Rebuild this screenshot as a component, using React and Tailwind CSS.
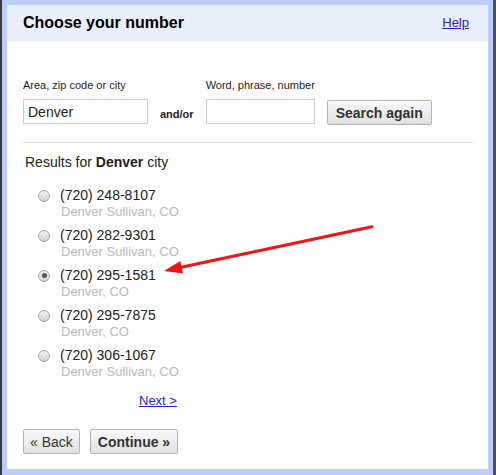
import React from "react";

const results = [
  { number: "(720) 248-8107", place: "Denver Sullivan, CO" },
  { number: "(720) 282-9301", place: "Denver Sullivan, CO" },
  { number: "(720) 295-1581", place: "Denver, CO", checked: true },
  { number: "(720) 295-7875", place: "Denver, CO" },
  { number: "(720) 306-1067", place: "Denver Sullivan, CO" },
];

function Radio({ checked }) {
  return (
    <span className="flex h-[12px] w-[12px] shrink-0 items-center justify-center rounded-full border border-[#a9a9a9] bg-gradient-to-b from-[#f2f2f2] to-[#d4d4d4]">
      {checked && <span className="h-[5px] w-[5px] rounded-full bg-[#555]" />}
    </span>
  );
}

export default function App() {
  return (
    <div className="relative h-[475px] w-[496px] border-l-2 border-r-[3px] border-l-[#3a3a3a] border-r-[#505050] bg-[#bccdfb] px-[5px] pb-[6px] pt-[5px] font-['Liberation_Sans',Arial,sans-serif] text-[#222]">
      <div className="flex h-full flex-col bg-white">
        <div className="flex h-9 shrink-0 items-center justify-between bg-[#e8eefa] pl-4 pr-[19px]">
          <h1 className="text-[16px] font-bold leading-5 text-black">Choose your number</h1>
          <a href="#" className="text-[13px] leading-4 text-[#2a22c8] underline">
            Help
          </a>
        </div>

        <div className="pl-4 pr-[15px] pt-[38px]">
          <div className="grid grid-cols-[125px_auto_109px_auto] justify-start gap-x-3 gap-y-[7px]">
            <div className="text-[11px] leading-[13px]">Area, zip code or city</div>
            <div />
            <div className="whitespace-nowrap text-[11px] leading-[13px]">Word, phrase, number</div>
            <div />

            <input
              defaultValue="Denver"
              className="h-[25px] w-[125px] border border-[#cfcfcf] px-1 text-[14px] text-[#222] outline-none"
            />
            <span className="mt-1 self-center text-[11px] font-bold leading-[13px]">and/or</span>
            <input className="h-[25px] w-[109px] border border-[#cfcfcf] px-1 text-[14px] outline-none" />
            <div className="mt-px self-start">
              <button
                type="button"
                className="h-[25px] rounded-[2px] border border-[#b4b4b4] bg-gradient-to-b from-[#f9f9f9] to-[#e0e0e0] px-2 text-[14px] font-bold leading-none text-[#333]"
              >
                Search again
              </button>
            </div>
          </div>

          <div className="mt-[17px] border-t border-[#dcdcdc]" />

          <p className="mt-[11px] pl-0.5 text-[14px] leading-[17px]">
            Results for <b>Denver</b> city
          </p>

          <ul className="mt-4 flex flex-col gap-[7px] pl-[15px]">
            {results.map((r) => (
              <li key={r.number}>
                <div className="flex h-[17px] items-center gap-[10px]">
                  <Radio checked={r.checked} />
                  <span className="text-[14px] leading-[17px] text-[#222]">{r.number}</span>
                </div>
                <div className="pl-[23px] text-[13px] leading-4 text-[#b9b9b9]">{r.place}</div>
              </li>
            ))}
          </ul>

          <div className="mt-[13px] pl-[116px] text-[13px] leading-4">
            <a href="#" className="text-[#2a22c8] underline">
              Next &gt;
            </a>
          </div>

          <div className="mt-5 flex gap-[10px]">
            <button
              type="button"
              className="h-[25px] rounded-[2px] border border-[#b4b4b4] bg-gradient-to-b from-[#f9f9f9] to-[#e0e0e0] px-[6px] text-[14px] leading-none text-[#333]"
            >
              « Back
            </button>
            <button
              type="button"
              className="h-[25px] rounded-[2px] border border-[#b4b4b4] bg-gradient-to-b from-[#f9f9f9] to-[#e0e0e0] px-[7px] text-[14px] font-bold leading-none text-[#333]"
            >
              Continue »
            </button>
          </div>
        </div>
      </div>

      <svg className="pointer-events-none absolute left-[-2px] top-0" width="496" height="475" viewBox="0 0 496 475">
        <line x1="372" y1="226.7" x2="180" y2="267.5" stroke="#f01414" strokeWidth="3" strokeLinecap="round" />
        <polygon points="164,271 183,273.4 180.3,261" fill="#f01414" />
      </svg>
    </div>
  );
}
